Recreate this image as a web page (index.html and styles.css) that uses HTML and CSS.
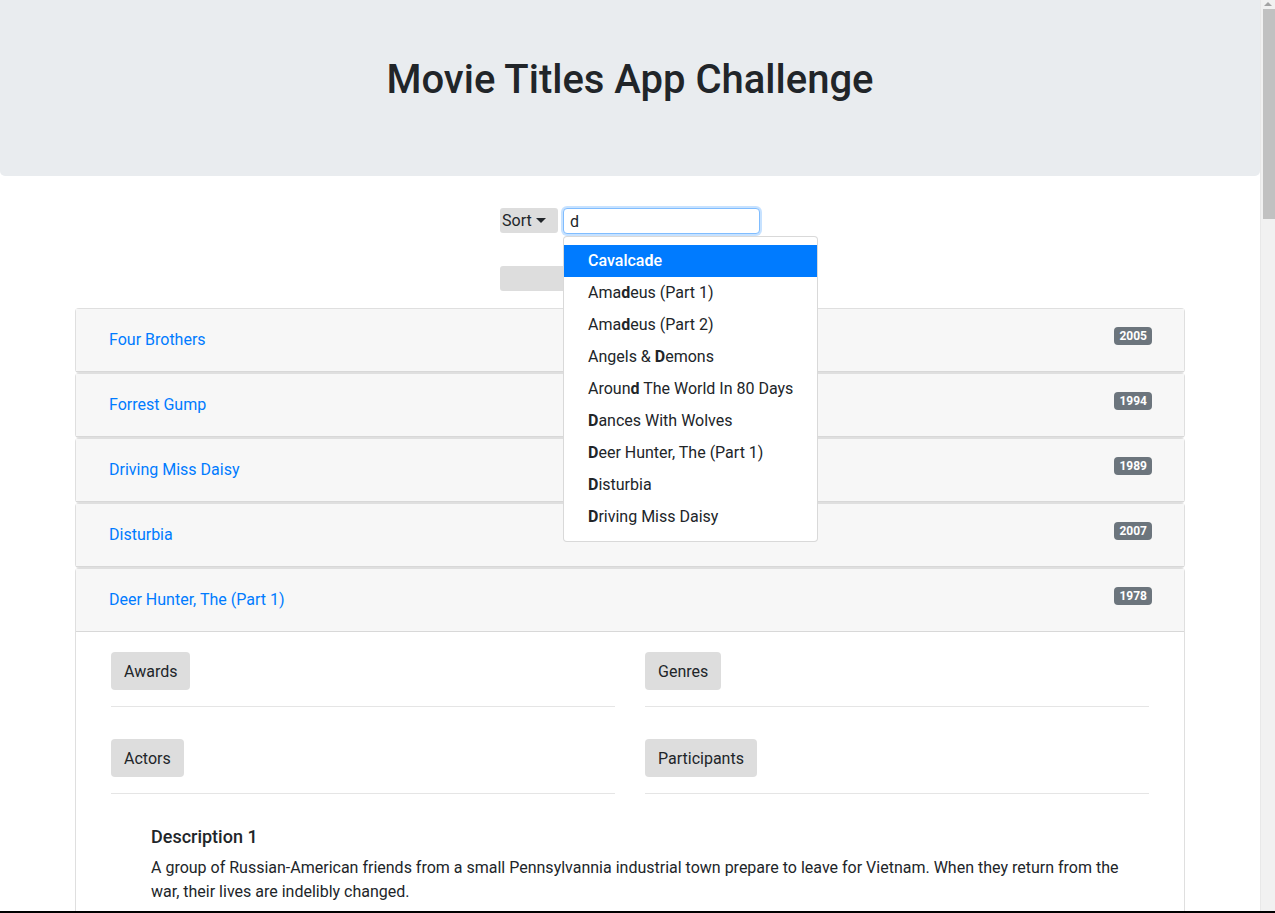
FILE: index.html
```html
<!DOCTYPE html>
<html lang="en">
<head>
<meta charset="utf-8">
<title>Movie Titles App Challenge</title>
<link rel="stylesheet" href="styles.css">
</head>
<body>
<header class="jumbotron">
  <h1 class="jumbo-title">Movie Titles App Challenge</h1>
</header>
<main class="container">
  <div class="controls">
    <div class="search-row">
      <button class="sort-btn" type="button">Sort<span class="caret"></span></button>
      <div class="search-wrap">
        <input class="search-input" type="text" value="d" autofocus>
        <ul class="suggestions">
          <li class="suggestion active">Cavalca<b>d</b>e</li>
          <li class="suggestion">Ama<b>d</b>eus (Part 1)</li>
          <li class="suggestion">Ama<b>d</b>eus (Part 2)</li>
          <li class="suggestion">Angels &amp; <b>D</b>emons</li>
          <li class="suggestion">Aroun<b>d</b> The World In 80 Days</li>
          <li class="suggestion"><b>D</b>ances With Wolves</li>
          <li class="suggestion"><b>D</b>eer Hunter, The (Part 1)</li>
          <li class="suggestion"><b>D</b>isturbia</li>
          <li class="suggestion"><b>D</b>riving Miss Daisy</li>
        </ul>
      </div>
    </div>
    <div class="gray-bar"></div>
  </div>

  <div class="accordion">
    <div class="card">
      <div class="card-header"><a class="movie-link" href="#">Four Brothers</a><span class="badge">2005</span></div>
    </div>
    <div class="card">
      <div class="card-header"><a class="movie-link" href="#">Forrest Gump</a><span class="badge">1994</span></div>
    </div>
    <div class="card">
      <div class="card-header"><a class="movie-link" href="#">Driving Miss Daisy</a><span class="badge">1989</span></div>
    </div>
    <div class="card">
      <div class="card-header"><a class="movie-link" href="#">Disturbia</a><span class="badge">2007</span></div>
    </div>
    <div class="card">
      <div class="card-header"><a class="movie-link" href="#">Deer Hunter, The (Part 1)</a><span class="badge">1978</span></div>
      <div class="card-body">
        <div class="detail-grid">
          <div class="section"><button class="gray-btn" type="button">Awards</button><hr class="rule"></div>
          <div class="section"><button class="gray-btn" type="button">Genres</button><hr class="rule"></div>
          <div class="section"><button class="gray-btn" type="button">Actors</button><hr class="rule"></div>
          <div class="section"><button class="gray-btn" type="button">Participants</button><hr class="rule"></div>
        </div>
        <ul class="descriptions">
          <li class="description">
            <h5 class="desc-title">Description 1</h5>
            <p class="desc-text">A group of Russian-American friends from a small Pennsylvannia industrial town prepare to leave for Vietnam. When they return from the war, their lives are indelibly changed.</p>
          </li>
        </ul>
      </div>
    </div>
  </div>
</main>
<div class="fake-scrollbar" aria-hidden="true">
  <span class="scroll-arrow"></span>
  <span class="scroll-thumb"></span>
</div>
<div class="frame-edge" aria-hidden="true"></div>
</body>
</html>
```

FILE: styles.css
```css
* { box-sizing: border-box; }
html, body { margin: 0; padding: 0; }
body {
  margin-right: 15px;
  font-family: Roboto, "Liberation Sans", Arial, sans-serif;
  font-size: 16px;
  line-height: 1.5;
  color: #212529;
  background: #fff;
}
.jumbotron {
  background: #e9ecef;
  padding: 56px 32px 72px;
  border-radius: 0 0 5px 5px;
  margin: 0 0 32px;
  text-align: center;
}
.jumbo-title {
  margin: 0;
  font-size: 40px;
  font-weight: 500;
  line-height: 48px;
  color: #212529;
}
.container {
  width: 1140px;
  margin: 0 auto;
  padding: 0 15px 40px;
}
.controls {
  display: flex;
  flex-direction: column;
  align-items: center;
  margin-bottom: 17px;
}
.search-row {
  display: flex;
  align-items: flex-start;
  gap: 5px;
}
.sort-btn {
  display: inline-flex;
  align-items: center;
  height: 25px;
  width: 58px;
  padding: 0 2px;
  border: 0;
  border-radius: 3px;
  background: #ddd;
  font: 16px Roboto, "Liberation Sans", sans-serif;
  color: #212529;
}
.caret {
  display: inline-block;
  margin-left: 4px;
  width: 0;
  height: 0;
  border-top: 5px solid #212529;
  border-left: 5px solid transparent;
  border-right: 5px solid transparent;
}
.search-wrap { position: relative; }
.search-input {
  width: 197px;
  height: 26px;
  padding: 0 6px;
  border: 1px solid #80bdff;
  border-radius: 4px;
  box-shadow: 0 0 0 2px rgba(0, 123, 255, .22);
  outline: none;
  font: 16px Roboto, "Liberation Sans", sans-serif;
  color: #212529;
  caret-color: #212529;
}
.suggestions {
  position: absolute;
  top: 28px;
  left: 0;
  z-index: 10;
  margin: 0;
  padding: 8px 0;
  list-style: none;
  background: #fff;
  border: 1px solid rgba(0, 0, 0, .15);
  border-radius: 4px;
  white-space: nowrap;
}
.suggestion {
  padding: 4px 24px;
  line-height: 24px;
  color: #212529;
}
.suggestion b { font-weight: 700; }
.suggestion.active {
  background: #007bff;
  color: #fff;
  font-weight: 500;
}
.gray-bar {
  margin-top: 32px;
  width: 260px;
  height: 25px;
  background: #ddd;
  border-radius: 3px;
}
.card {
  border: 1px solid rgba(0, 0, 0, .125);
  border-radius: 4px;
  background: #fff;
}
.card-header {
  display: flex;
  justify-content: space-between;
  align-items: flex-start;
  padding: 12px 32px 12px 33px;
  min-height: 63px;
  background: #f7f7f7;
  border-bottom: 1px solid rgba(0, 0, 0, .125);
}
.movie-link {
  margin-top: 7px;
  color: #007bff;
  text-decoration: none;
  line-height: 24px;
}
.badge {
  margin-top: 6px;
  display: inline-block;
  padding: 3px 5px;
  font-size: 12px;
  font-weight: 700;
  line-height: 12px;
  color: #fff;
  background: #6c757d;
  border-radius: 4px;
}
.card-body { padding: 20px 35px 20px; }
.detail-grid {
  display: grid;
  grid-template-columns: 1fr 1fr;
  column-gap: 30px;
}
.section { margin-bottom: 16px; }
.gray-btn {
  height: 38px;
  padding: 0 13px;
  border: 0;
  border-radius: 4px;
  background: #ddd;
  font: 16px Roboto, "Liberation Sans", sans-serif;
  color: #212529;
}
.rule {
  margin: 16px 0;
  border: 0;
  border-top: 1px solid rgba(0, 0, 0, .1);
}
.descriptions {
  list-style: none;
  margin: 0;
  padding: 0 0 0 40px;
}
.desc-title {
  margin: 0 0 8px;
  font-size: 18px;
  font-weight: 500;
  line-height: 1.2;
}
.desc-text { margin: 0 0 16px; }

/* window chrome drawn over the page */
.fake-scrollbar {
  position: fixed;
  top: 0;
  right: 0;
  width: 15px;
  height: 100%;
  background: #f1f1f1;
  border-left: 1px solid #e8e8e8;
}
.scroll-arrow {
  position: absolute;
  top: 2px;
  left: 3px;
  width: 0;
  height: 0;
  border-bottom: 4px solid #a3a3a3;
  border-left: 4px solid transparent;
  border-right: 4px solid transparent;
}
.scroll-thumb {
  position: absolute;
  top: 9px;
  left: 2px;
  width: 12px;
  height: 210px;
  background: #c1c1c1;
}
.frame-edge {
  position: fixed;
  left: 0;
  right: 0;
  bottom: 0;
  height: 2px;
  background: #000;
}
```
